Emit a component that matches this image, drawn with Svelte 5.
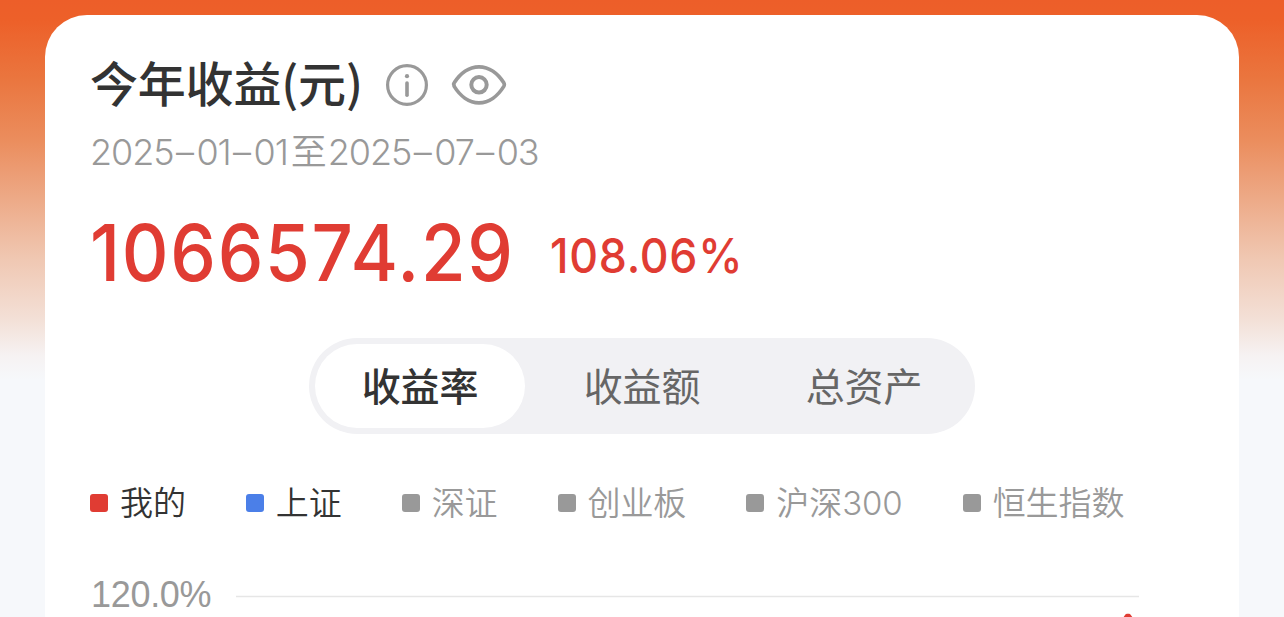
<script lang="ts">
  let activeTab = "rate";

  const dates = [
    ["2025", "01", "01"],
    ["2025", "07", "03"]
  ];

  const tabs = [
    { id: "rate", label: "收益率" },
    { id: "amount", label: "收益额" },
    { id: "assets", label: "总资产" }
  ];

  let series = [
    { name: "我的", tone: "mine", on: true },
    { name: "上证", tone: "index", on: true },
    { name: "深证", tone: "index", on: false },
    { name: "创业板", tone: "index", on: false },
    { name: "沪深300", tone: "index", on: false },
    { name: "恒生指数", tone: "index", on: false }
  ];
</script>

<main class="page">
  <section class="card">
    <header class="title-row">
      <h1>今年收益(元)</h1>
      <svg class="info" viewBox="0 0 44 44" fill="none">
        <circle cx="22" cy="22" r="19.4" stroke="#999" stroke-width="3.2" />
        <circle cx="22" cy="13.2" r="2.1" fill="#999" />
        <path d="M22 20V32.2" stroke="#999" stroke-width="3.6" stroke-linecap="round" />
      </svg>
      <svg class="eye" viewBox="0 0 56 44" fill="none" stroke="#999">
        <path
          d="M3 22C2.4 21.2 2.6 20.6 3.2 19.8C9 10.5 18 3.8 28 3.8S47 10.5 52.8 19.8C53.6 21.2 53.6 22 52.8 23.4C47 32.8 38 39.8 28 39.8S9 32.8 3.2 23.4Z"
          stroke-width="3.7"
          stroke-linejoin="round"
        />
        <circle cx="28" cy="21.8" r="7.7" stroke-width="4" />
      </svg>
    </header>

    <p class="period">
      {#each dates as parts, d}{#if d > 0}<b>至</b>{/if}{#each parts as part, i}{#if i > 0}<i>–</i>{/if}<span>{part}</span>{/each}{/each}
    </p>

    <div class="figures">
      <strong class="total">1066574.29</strong>
      <span class="percent">108.06%</span>
    </div>

    <nav class="tabs">
      {#each tabs as tab}
        <button type="button" class:active={activeTab === tab.id} on:click={() => (activeTab = tab.id)}>
          {tab.label}
        </button>
      {/each}
    </nav>

    <div class="legend">
      {#each series as item}
        <button type="button" class={item.tone} class:on={item.on} on:click={() => (item.on = !item.on)}>
          <i></i>{item.name}
        </button>
      {/each}
    </div>

    <div class="chart">
      <span class="axis-label">120.0%</span>
      <svg class="plot" viewBox="0 0 904 46" fill="none">
        <path d="M0 18.5H903" stroke="#e6e6e6" stroke-width="1.4" />
        <path d="M885 46L891 37.8L893 37.8L896 42" stroke="#e03c33" stroke-width="4" stroke-linejoin="round" />
      </svg>
    </div>
  </section>
</main>

<style>
  :global(body) {
    margin: 0;
    background: #f6f8fb;
  }

  .page {
    box-sizing: border-box;
    height: 617px;
    padding: 15px 45px 0;
    overflow: hidden;
    background: linear-gradient(
      #ed5e29 0,
      #ed6029 20px,
      #ea763f 80px,
      #eb8d5d 140px,
      #edaa88 200px,
      #f0c8b3 260px,
      #f3e0d7 320px,
      #f6f2f2 355px,
      #f6f8fb 380px
    );
    font-family: Inter, "Noto Sans CJK SC", sans-serif;
  }

  .card {
    box-sizing: border-box;
    height: 640px;
    padding: 40px 45px 0;
    border-radius: 42px;
    background: #fff;
  }

  .title-row {
    display: flex;
    align-items: center;
    height: 60px;
  }

  h1 {
    margin: 0;
    width: 295px;
    padding-bottom: 7px;
    font-family: "Noto Sans CJK SC", sans-serif;
    font-size: 48px;
    font-weight: 500;
    line-height: 53px;
    letter-spacing: -0.2px;
    color: #333;
    white-space: nowrap;
  }

  .info {
    width: 44px;
    height: 44px;
  }

  .eye {
    width: 56px;
    height: 44px;
    margin-left: 22px;
  }

  .period {
    display: flex;
    margin: 13px 0 0;
    font-size: 36px;
    font-weight: 350;
    line-height: 48px;
    letter-spacing: -1.1px;
    color: #999;
    white-space: nowrap;
  }

  .period i {
    width: 23px;
    font-style: normal;
    letter-spacing: 0;
    text-align: center;
  }

  .period b {
    width: 36px;
    margin: 0 1px 0 3px;
    font-weight: 350;
    letter-spacing: 0;
  }

  .figures {
    display: flex;
    align-items: center;
    height: 94px;
    margin-top: 30px;
    color: #e03c33;
    line-height: 94px;
  }

  /* slightly condensed numerals */
  .total,
  .percent {
    font-weight: 500;
    transform: scaleX(0.93);
    transform-origin: left center;
  }

  .total {
    width: 460px;
    font-size: 78px;
    letter-spacing: 1.8px;
  }

  .percent {
    padding-top: 5px;
    font-size: 48px;
    letter-spacing: 0.8px;
  }

  button {
    padding: 0;
    border: 0;
    background: none;
    font: inherit;
    cursor: pointer;
  }

  .tabs {
    box-sizing: border-box;
    display: grid;
    grid-template-columns: repeat(3, 210px);
    gap: 12px;
    width: 666px;
    height: 96px;
    margin: 38px auto 0;
    padding: 6px;
    border-radius: 48px;
    background: #f1f1f4;
  }

  .tabs button {
    padding-bottom: 4px;
    border-radius: 42px;
    font-family: "Noto Sans CJK SC", sans-serif;
    font-size: 39px;
    letter-spacing: -0.2px;
    color: #666;
  }

  .tabs .active {
    background: #fff;
    font-weight: 500;
    color: #333;
  }

  .legend {
    display: flex;
    gap: 60px;
    height: 48px;
    margin-top: 45px;
  }

  .legend button {
    display: flex;
    align-items: center;
    font-size: 33px;
    font-weight: 350;
    line-height: 48px;
    letter-spacing: -0.08px;
    color: #999;
    white-space: nowrap;
  }

  .legend i {
    width: 18px;
    height: 18px;
    margin-right: 12px;
    border-radius: 3px;
    background: #999;
  }

  .legend .on {
    color: #333;
  }

  .legend .on i {
    background: #4b7fe8;
  }

  .legend .mine.on i {
    background: #e03c33;
  }

  .chart {
    display: flex;
    height: 46px;
    margin-top: 51px;
  }

  .axis-label {
    box-sizing: border-box;
    width: 146px;
    padding-left: 1px;
    font-family: "Liberation Sans", Arial, sans-serif;
    font-size: 36px;
    line-height: 34px;
    letter-spacing: -0.3px;
    color: #999;
  }

  .plot {
    width: 904px;
    height: 46px;
  }
</style>
